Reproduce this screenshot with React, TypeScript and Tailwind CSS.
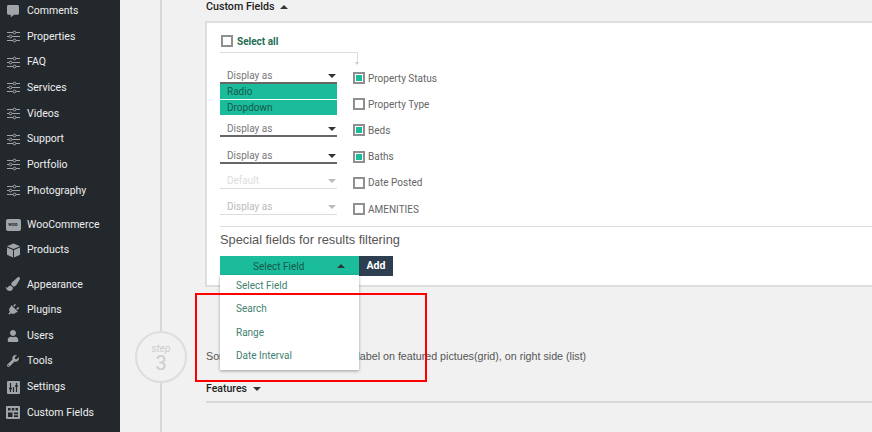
import React from 'react';
import { FaPaintBrush, FaPlug, FaUser, FaWrench, FaCommentAlt } from 'react-icons/fa';

const SlidersIcon = () => (
  <svg width="13" height="13" viewBox="0 0 13 13" fill="none" stroke="#a0a5aa" strokeWidth="1">
    <path d="M0 2.5h6M9 2.5h4M0 6.5h2M5 6.5h8M0 10.5h6M9 10.5h4" />
    <circle cx="7.5" cy="2.5" r="1.4" />
    <circle cx="3.5" cy="6.5" r="1.4" />
    <circle cx="7.5" cy="10.5" r="1.4" />
  </svg>
);

const WooIcon = () => (
  <span className="flex h-[12px] w-[15px] items-center justify-center rounded-[2px] bg-[#a0a5aa] text-[5px] font-bold leading-none text-[#23282d]">
    woo
  </span>
);

const BoxIcon = () => (
  <svg width="15" height="15" viewBox="0 0 15 15" fill="#a0a5aa">
    <path d="M7.5 0.5 14 3.2 7.5 6 1 3.2z" />
    <path d="M1 4.4 7 7v7.5L1 11.8zM14 4.4 8 7v7.5l6-2.7z" />
  </svg>
);

const SettingsIcon = () => (
  <svg width="13" height="13" viewBox="0 0 13 13">
    <rect width="13" height="13" rx="1" fill="#a0a5aa" />
    <path d="M3.5 2v9M9.5 2v9M6.5 6v5" stroke="#23282d" strokeWidth="1.2" />
    <path d="M2 7.5h3M8 5h3" stroke="#23282d" strokeWidth="1.6" />
  </svg>
);

const TableIcon = () => (
  <svg width="14" height="13" viewBox="0 0 14 13">
    <rect width="14" height="13" rx="1" fill="#a0a5aa" />
    <path d="M2 2h2.5v2.5H2zM5.800 2h2.5v2.5H5.800zM9.500 2H12v2.500H9.500zM2 6.500h4.500V11H2zM8 6.500h4V8.300H8zM8 9.300h4V11H8z" fill="#23282d" />
  </svg>
);

const menuTop = [
  { label: 'Comments', icon: <FaCommentAlt size={12} color="#a0a5aa" /> },
  { label: 'Properties', icon: <SlidersIcon /> },
  { label: 'FAQ', icon: <SlidersIcon /> },
  { label: 'Services', icon: <SlidersIcon /> },
  { label: 'Videos', icon: <SlidersIcon /> },
  { label: 'Support', icon: <SlidersIcon /> },
  { label: 'Portfolio', icon: <SlidersIcon /> },
  { label: 'Photography', icon: <SlidersIcon /> },
];
const menuShop = [
  { label: 'WooCommerce', icon: <WooIcon /> },
  { label: 'Products', icon: <BoxIcon /> },
];
const menuAdmin = [
  { label: 'Appearance', icon: <FaPaintBrush size={14} color="#a0a5aa" /> },
  { label: 'Plugins', icon: <FaPlug size={12} color="#a0a5aa" className="rotate-45" /> },
  { label: 'Users', icon: <FaUser size={12} color="#a0a5aa" /> },
  { label: 'Tools', icon: <FaWrench size={12} color="#a0a5aa" /> },
  { label: 'Settings', icon: <SettingsIcon /> },
  { label: 'Custom Fields', icon: <TableIcon /> },
];

const MenuGroup = ({ items }: { items: { label: string; icon: React.ReactNode }[] }) => (
  <div className="flex flex-col">
    {items.map(item => (
      <div key={item.label} className="flex h-[25.67px] items-center">
        <span className="flex w-[27px] justify-center pr-[1px]">{item.icon}</span>
        <span className="text-[10.500px] text-[#eeeeee]">{item.label}</span>
      </div>
    ))}
  </div>
);

const Caret = ({ up, light }: { up?: boolean; light?: boolean }) => (
  <span
    className={`h-0 w-0 border-x-[4px] border-x-transparent ${
      up ? 'border-b-[4px]' : 'border-t-[4px]'
    } ${light ? (up ? 'border-b-[#bbbbbb]' : 'border-t-[#bbbbbb]') : up ? 'border-b-[#333333]' : 'border-t-[#333333]'}`}
  />
);

const DisplaySelect = ({ label, faded, className }: { label: string; faded?: boolean; className?: string }) => (
  <div
    className={`flex h-[15px] items-center justify-between pl-[7px] pr-[1px] ${
      faded ? 'border-b border-[#dddddd] text-[#bbbbbb]' : 'border-b-2 border-[#666666] text-[#777777]'
    } ${className ?? ''}`}
  >
    <span className="text-[10px] leading-none">{label}</span>
    <Caret light={faded} />
  </div>
);

const Check = ({ label, checked }: { label: string; checked?: boolean }) => (
  <div className="flex h-[26.2px] items-center gap-[3px]">
    <span className="flex size-[12px] items-center justify-center border-2 border-[#8f8f8f] bg-white">
      {checked && <span className="size-[6px] bg-[#1abc9c]" />}
    </span>
    <span className="text-[10px] text-[#666666]">{label}</span>
  </div>
);

export default function App() {
  return (
    <div className="relative flex h-[432px] w-[872px] overflow-hidden bg-[#f1f1f1] font-['Roboto',sans-serif]">
      {/* admin menu */}
      <aside className="-mt-[2px] flex w-[120px] shrink-0 flex-col bg-[#23282d]">
        <MenuGroup items={menuTop} />
        <div className="h-[8.500px]" />
        <MenuGroup items={menuShop} />
        <div className="h-[8.500px]" />
        <MenuGroup items={menuAdmin} />
      </aside>

      {/* step rail */}
      <div className="ml-[15px] flex w-[52px] shrink-0 flex-col items-center">
        <div className="h-[331px] w-[2px] bg-[#d8d8d8]" />
        <div className="flex size-[52px] shrink-0 flex-col items-center justify-center rounded-full border-2 border-[#dddddd] text-[#cccccc]">
          <span className="text-[10px] italic leading-[11px]">step</span>
          <span className="text-[20px] leading-[18px]">3</span>
        </div>
        <div className="w-[2px] flex-1 bg-[#d8d8d8]" />
      </div>

      {/* settings column */}
      <main className="ml-[18px] flex w-[670px] shrink-0 flex-col">
        <div className="mb-[7px] ml-[1px] flex h-[14px] items-center gap-[6px]">
          <span className="text-[10.700px] font-medium text-[#222222]">Custom Fields</span>
          <Caret up />
        </div>

        <section className="h-[266px] border-2 border-[#dddddd] bg-white pl-[13px] pt-[12px]">
          <div className="flex h-[12px] items-center gap-[4px]">
            <span className="ml-[1px] size-[12px] border-2 border-[#8f8f8f] bg-white" />
            <span className="text-[10px] font-bold text-[#1f6b4f]">Select all</span>
          </div>

          <div className="mt-[5px] h-[10px] w-[138px] border-r border-t border-[#dddddd]" />
          <div className="ml-[135px] h-0 w-0 border-x-[2px] border-t-[3px] border-x-transparent border-t-[#cccccc]" />

          <div className="flex items-start">
            <div className="mt-[4px] flex w-[117px] shrink-0 flex-col">
              <DisplaySelect label="Display as" />
              <div className="flex h-[15px] items-center bg-[#1abc9c] pl-[7px] text-[10px] text-[#17594b]">Radio</div>
              <div className="mt-[1px] flex h-[15px] items-center bg-[#1abc9c] pl-[7px] text-[10px] text-[#17594b]">Dropdown</div>
              <DisplaySelect label="Display as" className="mt-[7px]" />
              <DisplaySelect label="Display as" className="mt-[12px]" />
              <DisplaySelect label="Default" faded className="mt-[10px] !text-[#dddddd]" />
              <DisplaySelect label="Display as" faded className="mt-[11px]" />
            </div>
            <div className="ml-[16px] flex flex-col">
              <Check label="Property Status" checked />
              <Check label="Property Type" />
              <Check label="Beds" checked />
              <Check label="Baths" checked />
              <Check label="Date Posted" />
              <Check label="AMENITIES" />
            </div>
          </div>

          <div className="mt-[4px] h-[1px] bg-[#dddddd]" />
          <p className="mt-[5px] font-['Liberation_Sans',sans-serif] text-[12.800px] leading-[16px] text-[#555555]">
            Special fields for results filtering
          </p>

          <div className="mt-[8px] flex">
            <div className="relative w-[139px]">
              <div className="flex h-[20px] items-center bg-[#1abc9c] pl-[33px] pr-[14px] text-[10px] text-[#17594b]">
                <span className="flex-1">Select Field</span>
                <Caret up />
              </div>
              <ul className="absolute left-0 top-[19px] z-10 h-[95px] w-full bg-white shadow-[0_1px_3px_rgba(0,0,0,0.35)]">
                {['Select Field', 'Search', 'Range', 'Date Interval'].map(option => (
                  <li key={option} className="flex h-[23.4px] items-center pl-[16px] text-[10px] text-[#3f7f70] first:mb-[2px] first:h-[20px]">
                    {option}
                  </li>
                ))}
              </ul>
            </div>
            <button className="h-[20px] w-[34px] bg-[#2c3e50] text-[10.500px] font-bold text-white">Add</button>
          </div>
        </section>

        <p className="ml-[1px] mt-[62px] whitespace-nowrap font-['Liberation_Sans',sans-serif] text-[10.700px] leading-[14px] text-[#555555]">
          Sort fields text will be shown as label on featured pictues(grid), on right side (list)
        </p>

        <div className="ml-[1px] mt-[19px] flex h-[14px] items-center gap-[6px]">
          <span className="text-[10.500px] font-medium text-[#222222]">Features</span>
          <Caret />
        </div>
        <div className="ml-[1px] mt-[5px] h-[2px] bg-[#d8d8d8]" />
      </main>

      {/* annotation added on the screenshot */}
      <div className="absolute left-[195px] top-[293px] z-20 h-[89px] w-[232px] border-2 border-[#ff0000]" />
    </div>
  );
}
